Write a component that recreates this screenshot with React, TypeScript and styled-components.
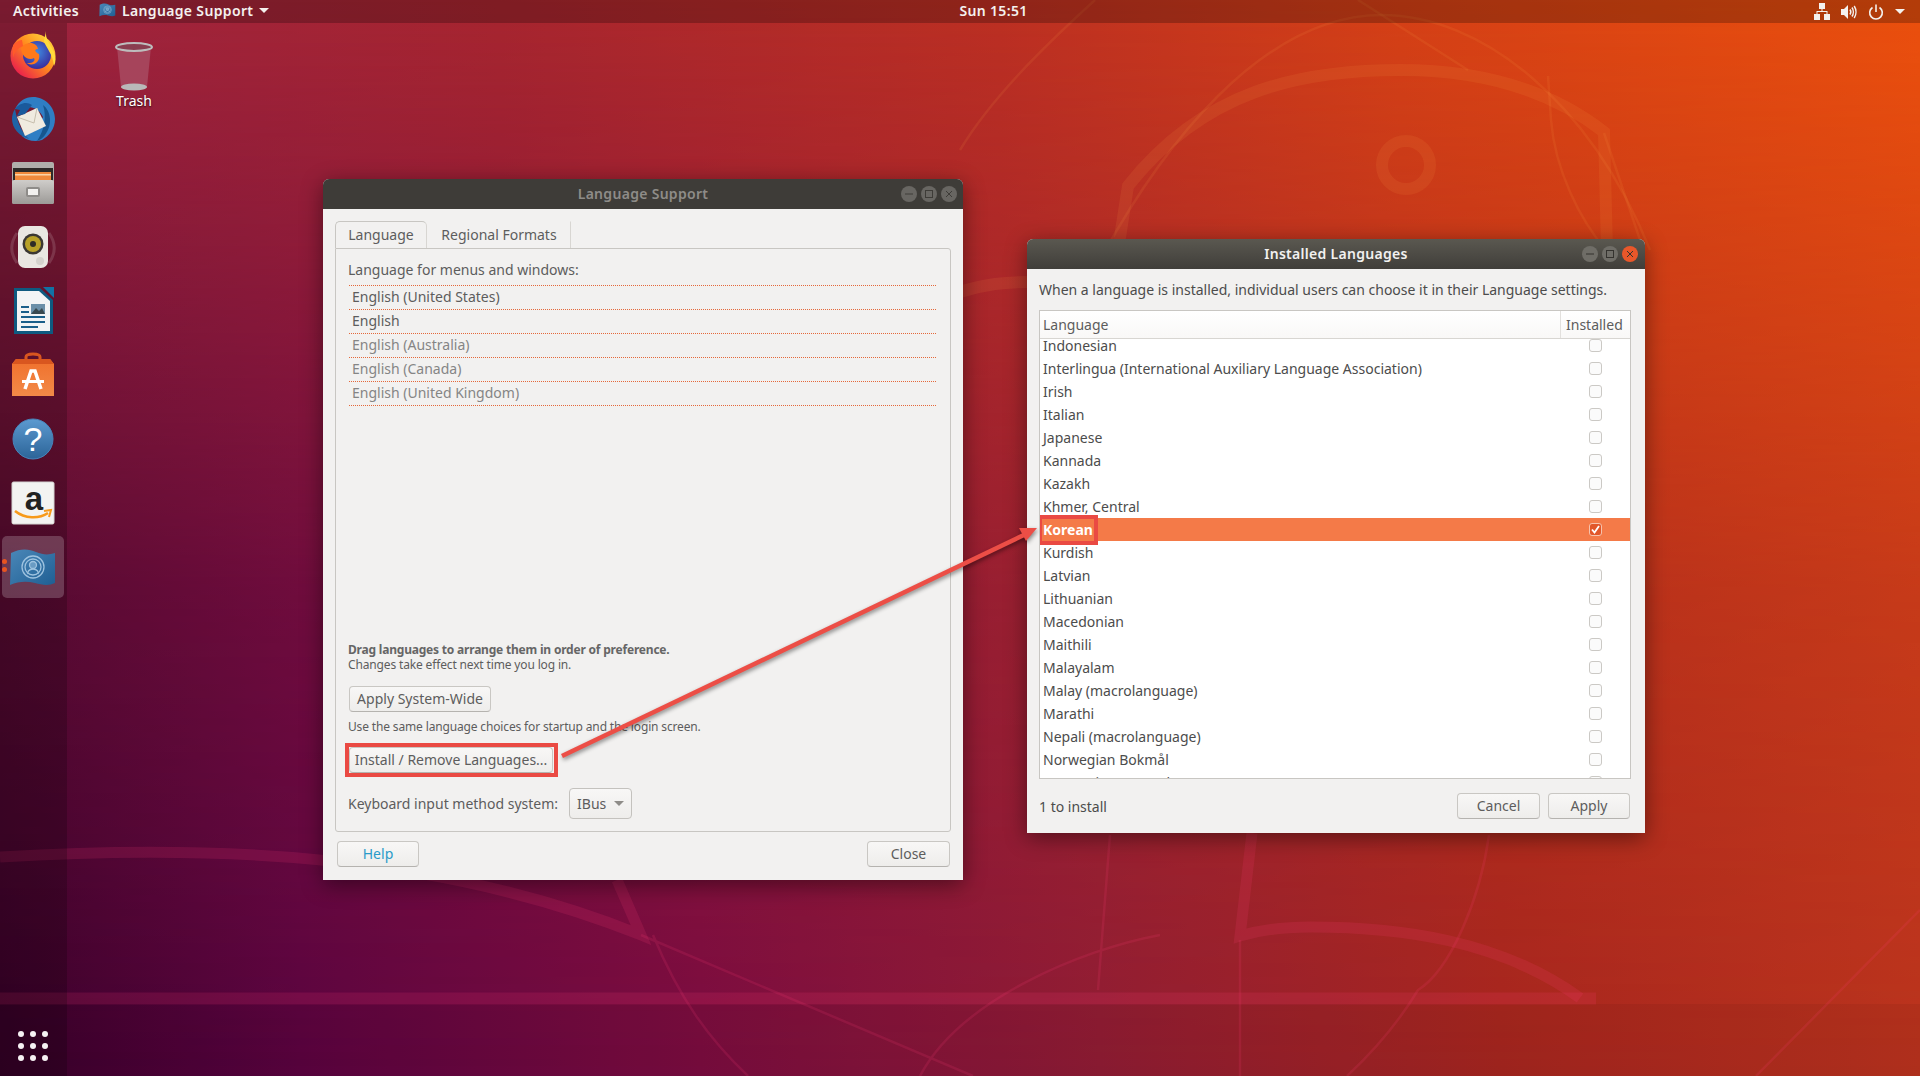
import React from 'react'
import styled, { createGlobalStyle } from 'styled-components'

const GlobalStyle = createGlobalStyle`
    html, body, #root {
        margin: 0;
        padding: 0;
        height: 100%;
    }
    body {
        font-family: "Noto Sans", "Open Sans", sans-serif;
        overflow: hidden;
    }
    * {
        box-sizing: border-box;
    }
`

const Desktop = styled.div`
    position: relative;
    width: 1920px;
    height: 1076px;
    overflow: hidden;
    display: flex;
    flex-direction: column;
    background: linear-gradient(
        to right,
        #a02440 0,
        #a8262f 500px,
        #bd3022 1000px,
        #d64116 1400px,
        #ec500d 1920px
    );

    &::before {
        content: '';
        position: absolute;
        inset: 0;
        background: linear-gradient(
            to right,
            #38002a 0,
            #5a0340 300px,
            #7a0c40 700px,
            #8f1c34 1100px,
            #a5251f 1500px,
            #b8321e 1920px
        );
        mask-image: linear-gradient(to bottom, transparent 0, rgba(0, 0, 0, 0.72) 55%, #000 100%);
    }
`

const WallpaperArt = styled.svg`
    position: absolute;
    inset: 0;
    width: 1920px;
    height: 1076px;
`

const TopBar = styled.header`
    position: relative;
    height: 23px;
    flex: none;
    display: grid;
    grid-template-columns: 1fr auto 1fr;
    align-items: center;
    padding: 0 12px 2px 13px;
    background: rgba(0, 0, 0, 0.24);
    color: #f4f1ee;
    font-size: 14px;
    font-weight: 600;
    letter-spacing: 0.35px;
`

const BarLeft = styled.div`
    display: flex;
    align-items: center;
`

const BarApp = styled.div`
    display: flex;
    align-items: center;
    gap: 6px;
    margin-left: 20px;
`

const BarClock = styled.div`
    text-align: center;
    transform: translateX(33px);
`

const BarTray = styled.div`
    display: flex;
    align-items: center;
    justify-content: flex-end;
    gap: 11px;
    padding: 2px 3px 0 0;
`

const Caret = styled.span<{ $color?: string }>`
    width: 0;
    height: 0;
    border-left: 5px solid transparent;
    border-right: 5px solid transparent;
    border-top: 5px solid ${(props) => props.$color ?? '#f4f1ee'};
`

const Workspace = styled.div`
    position: relative;
    flex: 1;
    display: flex;
    min-height: 0;
`

const Dock = styled.nav`
    width: 67px;
    flex: none;
    display: flex;
    flex-direction: column;
    align-items: center;
    gap: 2px;
    padding: 1px 1px 6px 0;
    background: rgba(0, 0, 0, 0.2);
`

const DockItem = styled.div<{ $active?: boolean }>`
    position: relative;
    width: 62px;
    height: 62px;
    flex: none;
    display: flex;
    align-items: center;
    justify-content: center;
    padding-top: ${(props) => (props.$active ? '3px' : '0')};
    border-radius: 5px;
    background: ${(props) => (props.$active ? 'rgba(255, 255, 255, 0.2)' : 'transparent')};
`

const RunDots = styled.span`
    position: absolute;
    left: 0;
    top: 23px;
    display: flex;
    flex-direction: column;
    gap: 3px;

    &::before,
    &::after {
        content: '';
        width: 5px;
        height: 5px;
        border-radius: 50%;
        background: #e95420;
    }
`

const AppGrid = styled.div`
    margin-top: auto;
    display: grid;
    grid-template-columns: repeat(3, 6px);
    gap: 6px;
    padding-bottom: 9px;
`

const AppDot = styled.span`
    width: 6px;
    height: 6px;
    border-radius: 50%;
    background: #f6f1f3;
`

const DesktopIcon = styled.div`
    position: absolute;
    left: 100px;
    top: 18px;
    width: 68px;
    display: flex;
    flex-direction: column;
    align-items: center;
    color: #fff;
    font-size: 14px;
    line-height: 16px;
    text-shadow: 0 1px 2px rgba(0, 0, 0, 0.8);
`

const Window = styled.section<{ $left: number; $top: number; $width: number; $height: number }>`
    position: absolute;
    left: ${(props) => props.$left}px;
    top: ${(props) => props.$top}px;
    width: ${(props) => props.$width}px;
    height: ${(props) => props.$height}px;
    display: flex;
    flex-direction: column;
    border-radius: 6px 6px 0 0;
    background: #f2f1f0;
    box-shadow: 0 5px 22px rgba(0, 0, 0, 0.45);
    color: #5d5d5d;
    font-size: 14px;
    letter-spacing: 0;
`

const TitleBar = styled.div<{ $focused?: boolean }>`
    position: relative;
    height: 30px;
    flex: none;
    display: flex;
    align-items: center;
    justify-content: center;
    padding-bottom: 2px;
    border-radius: 6px 6px 0 0;
    background: ${(props) =>
        props.$focused ? 'linear-gradient(to bottom, #5a5850, #403e3a)' : '#3e3c38'};
    color: ${(props) => (props.$focused ? '#f2f1f0' : '#8e8c88')};
    font-size: 14px;
    font-weight: 600;
    letter-spacing: 0.3px;
`

const WindowButtons = styled.div<{ $focused?: boolean }>`
    position: absolute;
    right: ${(props) => (props.$focused ? '7px' : '6px')};
    top: 7px;
    display: flex;
    gap: 4px;
`

const WindowButton = styled.span<{ $close?: boolean; $focused?: boolean }>`
    width: 16px;
    height: 16px;
    border-radius: 50%;
    display: flex;
    align-items: center;
    justify-content: center;
    background: ${(props) =>
        props.$close && props.$focused ? '#e9572a' : props.$focused ? '#6f6d67' : '#686662'};
`

const LeftBody = styled.div`
    flex: 1;
    min-height: 0;
    display: flex;
    flex-direction: column;
    padding: 12px 12px 13px;
`

const TabRow = styled.div`
    display: flex;
    height: 27px;
    flex: none;
`

const Tab = styled.div<{ $active?: boolean }>`
    display: flex;
    align-items: center;
    justify-content: center;
    padding-bottom: 2px;
    width: ${(props) => (props.$active ? '92px' : '144px')};
    border: 1px solid ${(props) => (props.$active ? '#c8c6c2' : 'transparent')};
    border-bottom: none;
    border-right-color: #d8d6d2;
    border-radius: ${(props) => (props.$active ? '5px 5px 0 0' : '0')};
    color: #5d5d5d;
`

const Frame = styled.div`
    flex: 1;
    min-height: 0;
    display: flex;
    flex-direction: column;
    align-items: flex-start;
    padding: 11px 14px 12px 12px;
    border: 1px solid #c8c6c2;
    border-radius: 0 3px 3px 3px;
`

const FrameLabel = styled.div`
    line-height: 20px;
    margin-bottom: 5px;
`

const PreferenceList = styled.div`
    align-self: stretch;
    margin-left: 1px;
    border-top: 1px dotted #e5683a;
`

const PreferenceRow = styled.div<{ $muted?: boolean }>`
    height: 24px;
    padding-left: 3px;
    line-height: 22px;
    border-bottom: 1px dotted #e5683a;
    color: ${(props) => (props.$muted ? '#858585' : '#5d5d5d')};
`

const HintTitle = styled.div`
    margin-top: auto;
    font-size: 12px;
    font-weight: 700;
    line-height: 15px;
    letter-spacing: -0.2px;
    color: #666;
`

const Hint = styled.div<{ $gap?: number }>`
    font-size: 12px;
    line-height: 15px;
    letter-spacing: -0.15px;
    margin-top: ${(props) => props.$gap ?? 0}px;
`

const Button = styled.div<{ $width?: number; $gap?: number; $inset?: number; $color?: string; $marked?: boolean }>`
    position: relative;
    height: 26px;
    flex: none;
    width: ${(props) => (props.$width ? `${props.$width}px` : 'auto')};
    display: flex;
    align-items: center;
    justify-content: center;
    padding-bottom: 1px;
    margin-top: ${(props) => props.$gap ?? 0}px;
    margin-left: ${(props) => props.$inset ?? 0}px;
    border: 1px solid #c9c7c3;
    border-bottom-color: #b5b3af;
    border-radius: 4px;
    background: linear-gradient(to bottom, #f8f7f6, #eeedeb);
    color: ${(props) => props.$color ?? '#5d5d5d'};

    ${(props) =>
        props.$marked &&
        `
        &::after {
            content: '';
            position: absolute;
            inset: -5px -6px -5px -5px;
            border: 4px solid #ea4a43;
        }
    `}
`

const InputRow = styled.div`
    display: flex;
    align-items: center;
    gap: 11px;
    margin-top: 15px;
`

const Select = styled.div`
    width: 63px;
    height: 31px;
    display: flex;
    align-items: center;
    justify-content: space-between;
    padding: 0 7px;
    border: 1px solid #c4c2be;
    border-radius: 4px;
    background: linear-gradient(to bottom, #f8f7f6, #eeedeb);
`

const LeftFooter = styled.div`
    display: flex;
    justify-content: space-between;
    padding: 0 1px 0 2px;
    margin-top: 9px;
`

const RightBody = styled.div`
    flex: 1;
    min-height: 0;
    display: flex;
    flex-direction: column;
    padding: 11px 14px 14px 12px;
    color: #4c4c4c;
`

const Description = styled.div`
    line-height: 20px;
    margin-bottom: 10px;
    color: #4c4c4c;
`

const LanguageTable = styled.div`
    flex: 1;
    min-height: 0;
    display: flex;
    flex-direction: column;
    border: 1px solid #c8c6c2;
    background: #fff;
`

const TableHeader = styled.div`
    height: 28px;
    flex: none;
    display: grid;
    grid-template-columns: 1fr 70px;
    border-bottom: 1px solid #d8d6d2;
    background: linear-gradient(to bottom, #ffffff, #f9f8f7);
    color: #5d5d5d;
`

const HeaderCell = styled.div<{ $divider?: boolean }>`
    display: flex;
    align-items: center;
    padding-left: ${(props) => (props.$divider ? '5px' : '3px')};
    border-left: ${(props) => (props.$divider ? '1px solid #e2e0dd' : 'none')};
`

const TableRows = styled.div`
    flex: 1;
    min-height: 0;
    overflow: hidden;
`

const RowsInner = styled.div`
    margin-top: -5px;
`

const LanguageRow = styled.div<{ $selected?: boolean }>`
    height: 23px;
    display: grid;
    grid-template-columns: 1fr 70px;
    align-items: center;
    line-height: 23px;
    padding-left: 3px;
    background: ${(props) => (props.$selected ? '#f47a48' : 'transparent')};
    color: ${(props) => (props.$selected ? '#fff' : '#4c4c4c')};
    font-weight: ${(props) => (props.$selected ? 700 : 400)};
`

const MarkedName = styled.span`
    position: relative;
    justify-self: start;

    &::after {
        content: '';
        position: absolute;
        inset: -3px -5px -4px -5px;
        border: 4px solid #ea4a43;
    }
`

const CheckBox = styled.span<{ $checked?: boolean }>`
    justify-self: center;
    width: 13px;
    height: 13px;
    margin-top: -1px;
    display: flex;
    align-items: center;
    justify-content: center;
    border: 1px solid ${(props) => (props.$checked ? '#f6c3ad' : '#cbc9c5')};
    border-radius: 3px;
    background: ${(props) => (props.$checked ? '#e2572a' : '#fbfbfb')};
`

const RightFooter = styled.div`
    display: flex;
    align-items: center;
    gap: 8px;
    margin-top: 14px;
    padding-right: 1px;
`

const InstallCount = styled.div`
    margin-right: auto;
`

const Annotation = styled.svg`
    position: absolute;
    left: 0;
    top: -23px;
    width: 1920px;
    height: 1076px;
    pointer-events: none;
    filter: drop-shadow(1px 2px 2px rgba(0, 0, 0, 0.45));
`

const languages = [
    'Indonesian',
    'Interlingua (International Auxiliary Language Association)',
    'Irish',
    'Italian',
    'Japanese',
    'Kannada',
    'Kazakh',
    'Khmer, Central',
    'Korean',
    'Kurdish',
    'Latvian',
    'Lithuanian',
    'Macedonian',
    'Maithili',
    'Malayalam',
    'Malay (macrolanguage)',
    'Marathi',
    'Nepali (macrolanguage)',
    'Norwegian Bokmål',
    'Norwegian Nynorsk',
]

const preferences = [
    { name: 'English (United States)', muted: false },
    { name: 'English', muted: false },
    { name: 'English (Australia)', muted: true },
    { name: 'English (Canada)', muted: true },
    { name: 'English (United Kingdom)', muted: true },
]

function Wallpaper() {
    return (
        <WallpaperArt viewBox="0 0 1920 1076" fill="none">
            <rect x="0" y="1004" width="1920" height="72" fill="#000" opacity="0.05" />
            <g stroke="#ffa04a" strokeOpacity="0.11">
                <circle cx="1406" cy="165" r="24" strokeWidth="12" />
                <path d="M1118 250 L1128 186 C1204 90 1300 70 1401 70 C1480 70 1550 90 1604 132 L1607 250" strokeWidth="12" />
                <path d="M960 292 C985 284 1005 282 1030 282" strokeWidth="12" />
                <path d="M1100 260 C1160 150 1260 15 1382 15 C1480 15 1590 100 1650 250" strokeWidth="2.5" />
                <path d="M1358 0 L1468 70 M1095 0 C1040 50 990 100 960 150 M1548 76 L1551 120 C1555 170 1580 220 1606 250 M1604 133 L1640 240" strokeWidth="2.5" />
            </g>
            <g stroke="#ff3c78" strokeOpacity="0.15">
                <path d="M0 998.5 H1596" strokeWidth="12" />
                <path d="M1252 833 L1240 936 Q1270 927 1310 927 C1400 927 1500 940 1580 998" strokeWidth="11" />
                <path d="M0 857 C200 845 430 850 641 935 L617 880" strokeWidth="11" />
                <path
                    d="M641 935 L973 1076 M653 935 C680 1000 710 1040 748 1076 M920 1076 C960 1000 1080 950 1160 935 M1240 940 L1240 1076 M1489 835 C1480 900 1450 970 1418 990 C1400 1020 1375 1050 1347 1076 M1110 835 L1098 990 M1920 910 L1756 1076"
                    strokeWidth="2.5"
                />
            </g>
        </WallpaperArt>
    )
}

function FlagIcon({ size }: { size: number }) {
    return (
        <svg width={size} height={size} viewBox="0 0 48 48">
            <defs>
                <linearGradient id="flagFill" x1="0" y1="0" x2="1" y2="1">
                    <stop offset="0" stopColor="#4a87b8" />
                    <stop offset="1" stopColor="#1f5f93" />
                </linearGradient>
            </defs>
            <path
                d="M2 8 C12 3 20 4 27 7 C34 10 40 10 46 8 L46 38 C40 41 33 40 26 38 C18 36 10 36 1 40 Z"
                fill="url(#flagFill)"
            />
            <g fill="none" stroke="#9ec3df" strokeWidth="1.3">
                <circle cx="24" cy="22" r="11" />
                <circle cx="24" cy="22" r="8" />
                <circle cx="24" cy="20" r="3.5" fill="#9ec3df" fillOpacity="0.5" />
                <path d="M24 24 C20 24 18 27 19 29 M24 24 C28 24 30 27 29 29" />
            </g>
        </svg>
    )
}

function FirefoxIcon() {
    return (
        <svg width="48" height="48" viewBox="0 0 48 48">
            <defs>
                <linearGradient id="foxBody" x1="0.9" y1="0.1" x2="0.1" y2="0.9">
                    <stop offset="0" stopColor="#ffd43a" />
                    <stop offset="0.45" stopColor="#ff8a1e" />
                    <stop offset="1" stopColor="#e8184f" />
                </linearGradient>
                <radialGradient id="foxGlobe" cx="0.5" cy="0.4" r="0.6">
                    <stop offset="0" stopColor="#3f8ae0" />
                    <stop offset="1" stopColor="#3a2c9c" />
                </radialGradient>
            </defs>
            <circle cx="24" cy="25" r="22.5" fill="url(#foxBody)" />
            <circle cx="28" cy="24" r="14" fill="url(#foxGlobe)" />
            <path d="M12 16 C20 9 28 12 29 18 C24 18 27 22 30 23 C32 31 24 36 17 32 C23 33 27 30 25 27 C20 30 12 26 12 16 Z" fill="#ff7a1a" />
            <path d="M37 0 C36 8 41 12 45 21 C47 26 47 31 45 35 C44 22 36 16 35 10 Z" fill="#ffdb3c" />
            <path d="M4 14 C8 10 11 9 13 9 L14 15 C9 17 5 22 4 27 Z" fill="#ff5a2a" />
        </svg>
    )
}

function ThunderbirdIcon() {
    return (
        <svg width="48" height="48" viewBox="0 0 48 48">
            <path d="M24 2 C36 2 46 12 46 24 C46 34 40 41 33 45 C26 47 18 46 13 41 L26 36 L34 22 C30 14 22 10 14 13 L6 14 C10 6 16 2 24 2 Z" fill="#2f7ec4" />
            <path d="M34 10 C42 16 44 30 36 40 C34 43 31 45 28 46 C35 36 38 22 34 10 Z" fill="#17568f" />
            <path d="M3 24 C3 20 4 17 6 14 C8 24 10 34 20 44 C10 41 3 33 3 24 Z" fill="#1f63a6" />
            <path d="M8 22 L28 13 L37 31 L16 41 Z" fill="#f0ebe0" />
            <path d="M8 22 L25 28 L28 13" fill="none" stroke="#c8bfae" strokeWidth="1" />
            <path d="M6 14 C10 8 18 6 23 10 L16 19 L8 21 L11 15 Z" fill="#1a5a9c" />
        </svg>
    )
}

function FilesIcon() {
    return (
        <svg width="48" height="48" viewBox="0 0 48 48">
            <defs>
                <linearGradient id="fileFront" x1="0" y1="0" x2="0" y2="1">
                    <stop offset="0" stopColor="#cfcdca" />
                    <stop offset="1" stopColor="#9c9a97" />
                </linearGradient>
            </defs>
            <rect x="3" y="3" width="42" height="42" rx="2" fill="#b0aeab" />
            <rect x="4" y="9" width="40" height="14" fill="#2d2a28" />
            <rect x="6" y="13" width="36" height="10" fill="#f08a3c" />
            <rect x="6" y="15" width="36" height="1.5" fill="#fbd4a8" />
            <rect x="3" y="21" width="42" height="24" rx="2" fill="url(#fileFront)" />
            <rect x="17" y="28" width="14" height="10" rx="2" fill="#8e8c89" />
            <rect x="19" y="30" width="10" height="6" fill="#f2f1ef" />
        </svg>
    )
}

function RhythmboxIcon() {
    return (
        <svg width="48" height="48" viewBox="0 0 48 48">
            <path d="M8 10 C1 20 1 30 8 40 M40 10 C47 20 47 30 40 40" fill="none" stroke="#fff" strokeOpacity="0.14" strokeWidth="3" />
            <rect x="9" y="3" width="30" height="42" rx="7" fill="#e9e7e2" />
            <circle cx="24" cy="21" r="10.5" fill="#3a3833" />
            <circle cx="24" cy="21" r="8" fill="#b7a128" />
            <circle cx="24" cy="21" r="3" fill="#2e2c27" />
            <circle cx="31" cy="38" r="4" fill="#d4d2cd" />
        </svg>
    )
}

function WriterIcon() {
    return (
        <svg width="48" height="48" viewBox="0 0 48 48">
            <path d="M5 1 H31 L44 13 V47 H5 Z" fill="#0e5a80" />
            <path d="M8 4 H30 L41 14 V44 H8 Z" fill="#f2f4f5" />
            <path d="M34 0 H45 V11 Z" fill="#1273a4" />
            <rect x="12" y="19" width="8" height="2" fill="#1a5f8a" />
            <rect x="12" y="24" width="8" height="2" fill="#1a5f8a" />
            <rect x="12" y="29" width="24" height="2" fill="#1a5f8a" />
            <rect x="12" y="34" width="24" height="2" fill="#1a5f8a" />
            <rect x="12" y="39" width="17" height="2" fill="#1a5f8a" />
            <rect x="22" y="17" width="14" height="10" fill="#6b8fa8" />
            <path d="M22 27 L27 21 L30 24 L33 21 L36 27 Z" fill="#3a4a50" />
        </svg>
    )
}

function SoftwareIcon() {
    return (
        <svg width="48" height="48" viewBox="0 0 48 48">
            <defs>
                <linearGradient id="bagFill" x1="0" y1="0" x2="0" y2="1">
                    <stop offset="0" stopColor="#f0702c" />
                    <stop offset="1" stopColor="#f28a48" />
                </linearGradient>
            </defs>
            <path d="M17 13 V6 C17 2 31 2 31 6 V13" fill="none" stroke="#d9561f" strokeWidth="3" />
            <path d="M3 45 V13 L7 8 H41 L45 13 V45 Z" fill="url(#bagFill)" />
            <path d="M3 13 H45 L41 8 H7 Z" fill="#d9561f" />
            <path d="M16 38 L22 20 H26 L32 38" fill="none" stroke="#fff" strokeWidth="3.5" />
            <rect x="13" y="29" width="22" height="3" fill="#fff" />
        </svg>
    )
}

function HelpIcon() {
    return (
        <svg width="48" height="48" viewBox="0 0 48 48">
            <defs>
                <linearGradient id="helpFill" x1="0" y1="0" x2="0" y2="1">
                    <stop offset="0" stopColor="#5c9ad0" />
                    <stop offset="1" stopColor="#2c6498" />
                </linearGradient>
            </defs>
            <circle cx="24" cy="24" r="20" fill="url(#helpFill)" stroke="#4884bb" />
            <text x="24" y="36" textAnchor="middle" fontFamily="Liberation Sans, sans-serif" fontSize="34" fill="#fff">
                ?
            </text>
        </svg>
    )
}

function AmazonIcon() {
    return (
        <svg width="48" height="48" viewBox="0 0 48 48">
            <rect x="3" y="3" width="42" height="42" rx="1.5" fill="#f3f3f2" stroke="#d5d5d3" />
            <text x="25" y="31" textAnchor="middle" fontFamily="Liberation Sans, sans-serif" fontWeight="700" fontSize="33" fill="#222">
                a
            </text>
            <path d="M6 32 C16 40 30 40 39 34" fill="none" stroke="#f79a1b" strokeWidth="2.6" />
            <path d="M35 32 L42 31 L40 38" fill="none" stroke="#f79a1b" strokeWidth="2" />
        </svg>
    )
}

function TrashIcon() {
    return (
        <svg width="44" height="52" viewBox="0 0 44 52">
            <path d="M5 6 L9 46 C13 50 31 50 35 46 L39 6 Z" fill="#a84a62" fillOpacity="0.85" />
            <ellipse cx="22" cy="46" rx="13" ry="3.5" fill="#b9b9b9" />
            <ellipse cx="22" cy="6" rx="18" ry="4" fill="#8a3e50" stroke="#bdbdbd" strokeWidth="2" />
        </svg>
    )
}

function NetworkIcon() {
    return (
        <svg width="16" height="17" viewBox="0 0 16 17" fill="#f4f1ee">
            <rect x="5" y="0" width="6" height="6" />
            <rect x="0" y="11" width="6" height="6" />
            <rect x="10" y="11" width="6" height="6" />
            <path d="M7.5 6 H8.5 V8 H13.5 V11 H12.5 V9 H3.5 V11 H2.5 V8 H7.5 Z" />
        </svg>
    )
}

function VolumeIcon() {
    return (
        <svg width="16" height="16" viewBox="0 0 16 16" fill="none" stroke="#f4f1ee">
            <path d="M0 5 H3 L7 1 V15 L3 11 H0 Z" fill="#f4f1ee" stroke="none" />
            <path d="M9 5.5 C10 7 10 9 9 10.5" strokeWidth="1.5" />
            <path d="M11 3.5 C12.7 6 12.7 10 11 12.5" strokeWidth="1.5" />
            <path d="M13.2 2 C15.5 5.5 15.5 10.5 13.2 14" strokeWidth="1.5" />
        </svg>
    )
}

function PowerIcon() {
    return (
        <svg width="16" height="16" viewBox="0 0 16 16" fill="none" stroke="#f4f1ee" strokeWidth="1.6">
            <path d="M4.5 3.5 A6.3 6.3 0 1 0 11.5 3.5" />
            <path d="M8 0.5 V8" />
        </svg>
    )
}

function WindowControls({ focused }: { focused?: boolean }) {
    const stroke = focused ? '#35332f' : '#3e3c38'
    return (
        <WindowButtons $focused={focused}>
            <WindowButton $focused={focused}>
                <svg width="8" height="8" viewBox="0 0 8 8" stroke={stroke}>
                    <path d="M0 4 H8" />
                </svg>
            </WindowButton>
            <WindowButton $focused={focused}>
                <svg width="8" height="8" viewBox="0 0 8 8" fill="none" stroke={stroke}>
                    <rect x="0.5" y="0.5" width="7" height="7" />
                </svg>
            </WindowButton>
            <WindowButton $focused={focused} $close>
                <svg width="8" height="8" viewBox="0 0 8 8" stroke={stroke}>
                    <path d="M1 1 L7 7 M7 1 L1 7" />
                </svg>
            </WindowButton>
        </WindowButtons>
    )
}

function LanguageSupportWindow() {
    return (
        <Window $left={323} $top={156} $width={640} $height={701}>
            <TitleBar>
                Language Support
                <WindowControls />
            </TitleBar>
            <LeftBody>
                <TabRow>
                    <Tab $active>Language</Tab>
                    <Tab>Regional Formats</Tab>
                </TabRow>
                <Frame>
                    <FrameLabel>Language for menus and windows:</FrameLabel>
                    <PreferenceList>
                        {preferences.map((item) => (
                            <PreferenceRow key={item.name} $muted={item.muted}>
                                {item.name}
                            </PreferenceRow>
                        ))}
                    </PreferenceList>
                    <HintTitle>Drag languages to arrange them in order of preference.</HintTitle>
                    <Hint>Changes take effect next time you log in.</Hint>
                    <Button $width={142} $gap={14} $inset={1}>
                        Apply System-Wide
                    </Button>
                    <Hint $gap={7}>Use the same language choices for startup and the login screen.</Hint>
                    <Button $width={204} $gap={13} $inset={1} $marked>
                        Install / Remove Languages...
                    </Button>
                    <InputRow>
                        Keyboard input method system:
                        <Select>
                            IBus
                            <Caret $color="#8e8c88" />
                        </Select>
                    </InputRow>
                </Frame>
                <LeftFooter>
                    <Button $width={82} $color="#2a9bc9">
                        Help
                    </Button>
                    <Button $width={83}>Close</Button>
                </LeftFooter>
            </LeftBody>
        </Window>
    )
}

function InstalledLanguagesWindow() {
    return (
        <Window $left={1027} $top={216} $width={618} $height={594}>
            <TitleBar $focused>
                Installed Languages
                <WindowControls focused />
            </TitleBar>
            <RightBody>
                <Description>
                    When a language is installed, individual users can choose it in their Language settings.
                </Description>
                <LanguageTable>
                    <TableHeader>
                        <HeaderCell>Language</HeaderCell>
                        <HeaderCell $divider>Installed</HeaderCell>
                    </TableHeader>
                    <TableRows>
                        <RowsInner>
                            {languages.map((name) => {
                                const selected = name === 'Korean'
                                return (
                                    <LanguageRow key={name} $selected={selected}>
                                        {selected ? <MarkedName>{name}</MarkedName> : <span>{name}</span>}
                                        <CheckBox $checked={selected}>
                                            {selected && (
                                                <svg width="9" height="9" viewBox="0 0 9 9" fill="none" stroke="#fff" strokeWidth="1.8">
                                                    <path d="M1 4.5 L3.5 7.5 L8 1" />
                                                </svg>
                                            )}
                                        </CheckBox>
                                    </LanguageRow>
                                )
                            })}
                        </RowsInner>
                    </TableRows>
                </LanguageTable>
                <RightFooter>
                    <InstallCount>1 to install</InstallCount>
                    <Button $width={83}>Cancel</Button>
                    <Button $width={82}>Apply</Button>
                </RightFooter>
            </RightBody>
        </Window>
    )
}

export default function App() {
    return (
        <Desktop>
            <GlobalStyle />
            <Wallpaper />
            <TopBar>
                <BarLeft>
                    Activities
                    <BarApp>
                        <FlagIcon size={17} />
                        Language Support
                        <Caret />
                    </BarApp>
                </BarLeft>
                <BarClock>Sun 15:51</BarClock>
                <BarTray>
                    <NetworkIcon />
                    <VolumeIcon />
                    <PowerIcon />
                    <Caret />
                </BarTray>
            </TopBar>
            <Workspace>
                <Dock>
                    <DockItem><FirefoxIcon /></DockItem>
                    <DockItem><ThunderbirdIcon /></DockItem>
                    <DockItem><FilesIcon /></DockItem>
                    <DockItem><RhythmboxIcon /></DockItem>
                    <DockItem><WriterIcon /></DockItem>
                    <DockItem><SoftwareIcon /></DockItem>
                    <DockItem><HelpIcon /></DockItem>
                    <DockItem><AmazonIcon /></DockItem>
                    <DockItem $active>
                        <RunDots />
                        <FlagIcon size={48} />
                    </DockItem>
                    <AppGrid>
                        {Array.from({ length: 9 }, (_, i) => (
                            <AppDot key={i} />
                        ))}
                    </AppGrid>
                </Dock>
                <DesktopIcon>
                    <TrashIcon />
                    Trash
                </DesktopIcon>
                <LanguageSupportWindow />
                <InstalledLanguagesWindow />
                <Annotation viewBox="0 0 1920 1076">
                    <path d="M562 756 L1026 534" stroke="#ec4e46" strokeWidth="4.5" fill="none" />
                    <path d="M1037 528 L1019 528 L1026 541 Z" fill="#ec4e46" />
                </Annotation>
            </Workspace>
        </Desktop>
    )
}
